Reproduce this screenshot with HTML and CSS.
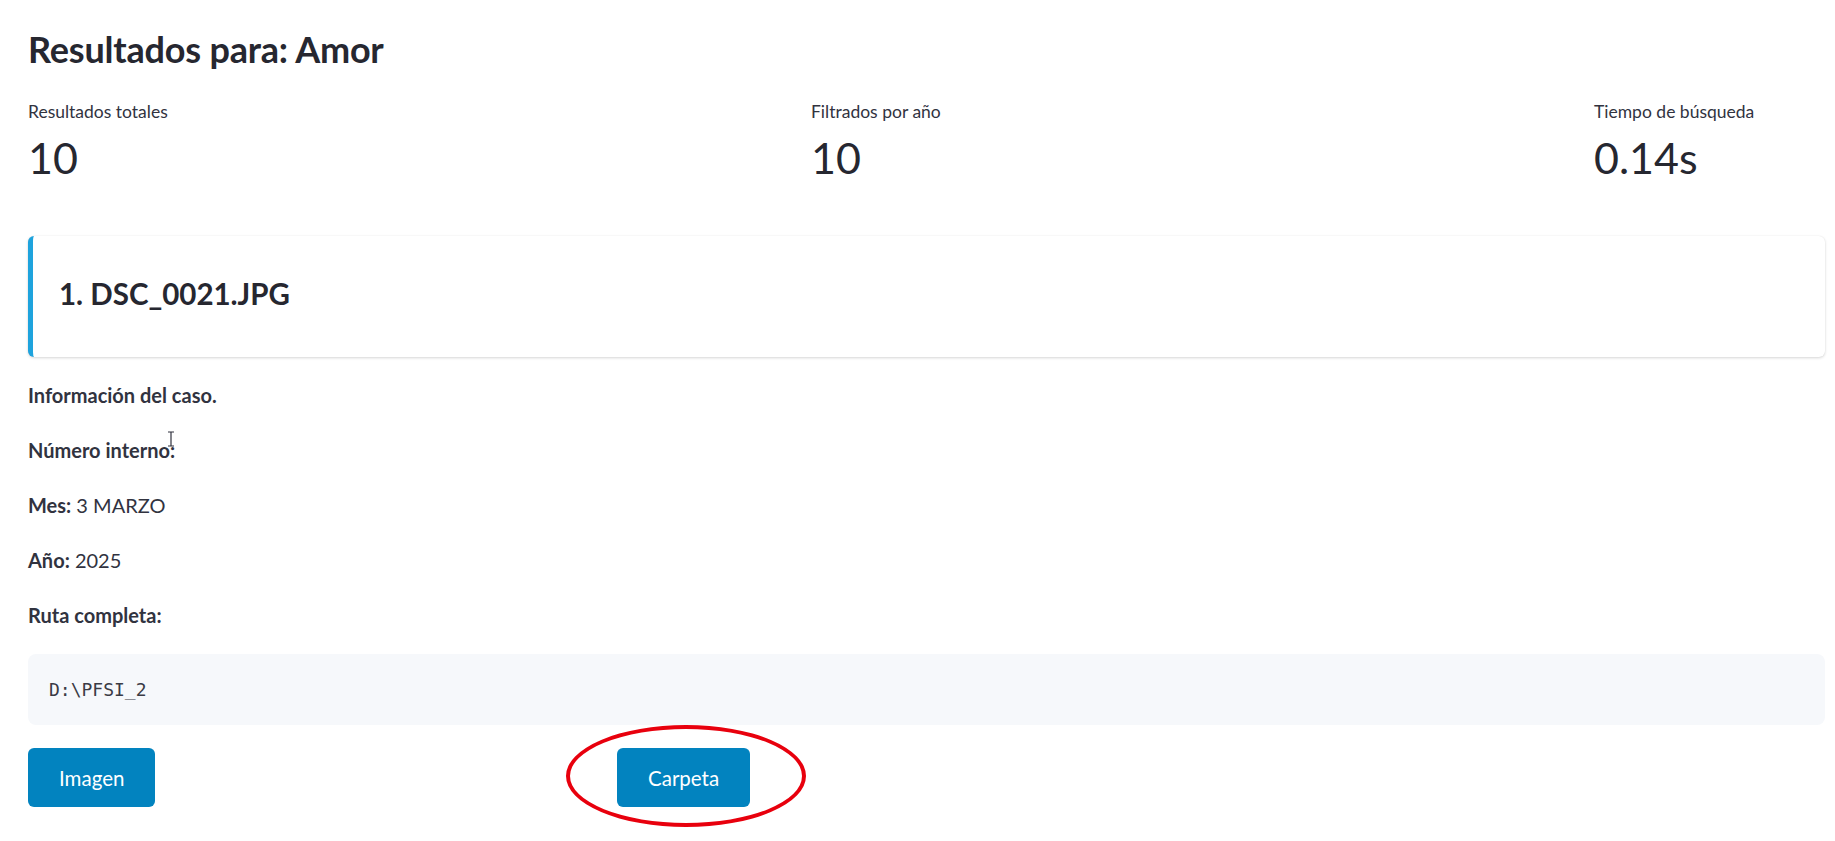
FILE: index.html
```html
<!DOCTYPE html>
<html lang="es">
<head>
<meta charset="utf-8">
<title>Resultados para: Amor</title>
<link rel="stylesheet" href="styles.css">
</head>
<body>
<main class="page">
  <h1 class="title">Resultados para: Amor</h1>

  <section class="metrics">
    <div class="metric">
      <div class="metric-label">Resultados totales</div>
      <div class="metric-value">10</div>
    </div>
    <div class="metric">
      <div class="metric-label">Filtrados por año</div>
      <div class="metric-value">10</div>
    </div>
    <div class="metric">
      <div class="metric-label">Tiempo de búsqueda</div>
      <div class="metric-value">0.14s</div>
    </div>
  </section>

  <article class="card">
    <h2 class="card-title">1. DSC_0021.JPG</h2>
  </article>

  <section class="info">
    <p class="info-head">Información del caso.</p>
    <p class="info-line"><strong>Número interno:</strong>
      <svg class="ibeam" width="8" height="16" viewBox="0 0 8 16" aria-hidden="true">
        <path d="M1 1h6M4 1v14M1 15h6" fill="none" stroke="#31333f" stroke-width="1.2"/>
      </svg>
    </p>
    <p><strong>Mes:</strong> 3 MARZO</p>
    <p><strong>Año:</strong> 2025</p>
    <p><strong>Ruta completa:</strong></p>
  </section>

  <pre class="code"><code>D:\PFSI_2</code></pre>

  <div class="actions">
    <div class="action-cell">
      <button class="btn">Imagen</button>
    </div>
    <div class="action-cell">
      <button class="btn">Carpeta</button>
      <span class="highlight" aria-hidden="true"></span>
    </div>
    <div class="action-cell"></div>
  </div>
</main>
</body>
</html>
```

FILE: styles.css
```css
* { box-sizing: border-box; }

html, body {
  margin: 0;
  padding: 0;
  background: #ffffff;
}

body {
  font-family: "Lato", "Open Sans", "Liberation Sans", sans-serif;
  color: #31333f;
  overflow: hidden;
}

.page {
  padding: 25px 10px 0 28px;
  width: 1835px;
  min-height: 841px;
}

.title {
  margin: 0;
  font-size: 36px;
  font-weight: 700;
  line-height: 48px;
  color: #262730;
  letter-spacing: -0.2px;
}

.metrics {
  display: grid;
  grid-template-columns: 783px 783px 1fr;
  margin-top: 28px;
}

.metric-label {
  font-size: 17.5px;
  line-height: 22px;
  color: #31333f;
}

.metric-value {
  font-size: 43px;
  line-height: 56px;
  margin-top: 7px;
  color: #262730;
}

.card {
  margin-top: 50px;
  height: 121px;
  display: flex;
  align-items: center;
  padding: 0 0 6px 26px;
  border-left: 5px solid #1ea3dd;
  border-radius: 6px;
  background: #ffffff;
  box-shadow: 0 1px 3px rgba(0, 0, 0, 0.16), 0 0 1px rgba(0, 0, 0, 0.08);
}

.card-title {
  margin: 0;
  font-size: 29.5px;
  font-weight: 700;
  color: #262730;
}

.info {
  display: flex;
  flex-direction: column;
  gap: 23px;
  margin-top: 22px;
}

.info p {
  margin: 0;
  font-size: 20px;
  line-height: 32px;
}

.info strong,
.info .info-head {
  font-weight: 700;
}

.info-line {
  position: relative;
}

.ibeam {
  position: absolute;
  left: 139px;
  top: -3px;
}

.code {
  margin: 23px 0 0 0;
  height: 71px;
  display: flex;
  align-items: center;
  padding-left: 21px;
  background: #f6f8fb;
  border-radius: 8px;
  font-family: "DejaVu Sans Mono", "Liberation Mono", monospace;
  font-size: 18px;
  color: #3a3b45;
}

.actions {
  display: grid;
  grid-template-columns: 589px 589px 1fr;
  margin-top: 23px;
}

.action-cell {
  position: relative;
}

.btn {
  height: 59px;
  padding: 0 31px;
  border: none;
  border-radius: 6px;
  background: #0283bf;
  color: #ffffff;
  font-family: inherit;
  font-size: 20.5px;
  cursor: pointer;
}

.highlight {
  position: absolute;
  left: -51px;
  top: -23px;
  width: 240px;
  height: 102px;
  border: 4px solid #e8000d;
  border-radius: 50%;
  pointer-events: none;
}
```
